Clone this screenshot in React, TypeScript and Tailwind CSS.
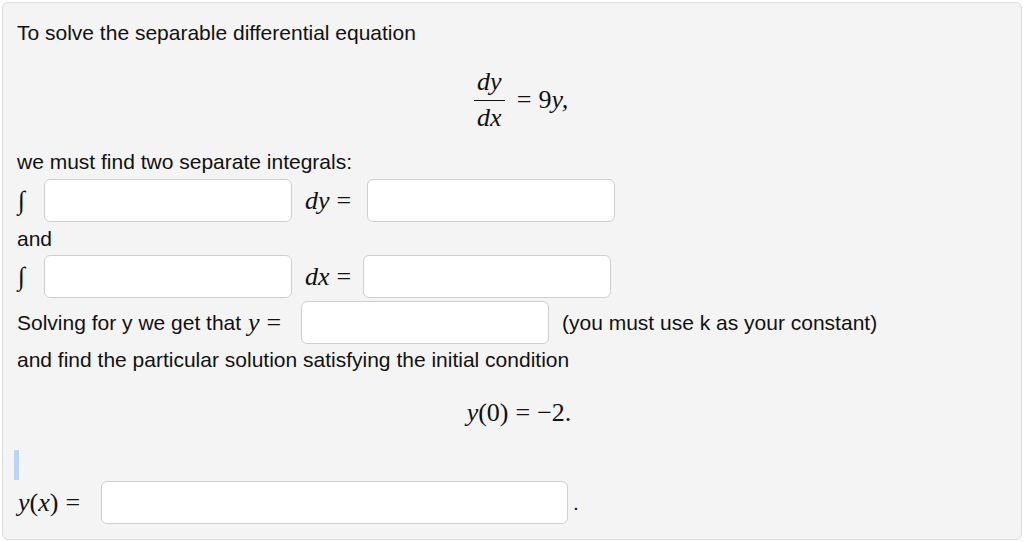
import React from "react";

const sans = "font-['Helvetica','Liberation_Sans',Arial,sans-serif]";
const math = "font-['Liberation_Serif','Times_New_Roman',serif] italic";

const Field = ({ className = "" }: { className?: string }) => (
  <input
    type="text"
    className={`h-[43px] rounded-md border-[1.5px] border-[#cfcfcf] bg-white outline-none ${className}`}
  />
);

const M = ({ children, className = "" }: { children: React.ReactNode; className?: string }) => (
  <span className={`${math} text-[26px] leading-none ${className}`}>{children}</span>
);

const Up = ({ children, className = "" }: { children: React.ReactNode; className?: string }) => (
  <span className={`not-italic ${className}`}>{children}</span>
);

const Eq = () => <Up className="mx-[7px]">=</Up>;

export default function App() {
  return (
    <div className="w-[1024px] h-[542px] bg-white p-[2px]">
      <div
        className={`${sans} h-[538px] w-[1020px] rounded-md border border-[#dcdcdc] bg-[#f4f4f4] pl-[14px] pt-[18px] text-[21px] leading-[24px] text-[#111]`}
      >
        <p>To solve the separable differential equation</p>

        {/* dy/dx = 9y, */}
        <div className="mt-[23px] flex h-[64px] items-center justify-center pl-[4px]">
          <div className="flex flex-col items-center">
            <M className="px-[3px] pb-[5px]">dy</M>
            <div className="h-[1.5px] w-[31px] bg-[#111]" />
            <M className="px-[3px] pt-[4px]">dx</M>
          </div>
          <M className="ml-[5px]">
            <Eq />
            <Up>9</Up>y,
          </M>
        </div>

        <p className="mt-[18px]">we must find two separate integrals:</p>

        <div className="mt-[5px] flex h-[43px] items-center">
          <M className="w-[27px] pl-[1px]">∫</M>
          <Field className="w-[248px]" />
          <M className="ml-[13px] w-[62px]">
            dy<Eq />
          </M>
          <Field className="w-[248px]" />
        </div>

        <p className="mt-[5px]">and</p>

        <div className="mt-[4px] flex h-[43px] items-center">
          <M className="w-[27px] pl-[1px]">∫</M>
          <Field className="w-[248px]" />
          <M className="ml-[13px] w-[58px]">
            dx<Eq />
          </M>
          <Field className="w-[248px]" />
        </div>

        <div className="mt-[3px] flex h-[43px] items-center">
          <span className="w-[231px]">Solving for y we get that</span>
          <M className="w-[53px]">
            y<Eq />
          </M>
          <Field className="w-[248px]" />
          <span className="ml-[13px]">(you must use k as your constant)</span>
        </div>

        <p className="mt-[4px]">and find the particular solution satisfying the initial condition</p>

        <div className="mt-[28px] flex h-[26px] items-center justify-center">
          <M>
            y<Up>(0)</Up>
            <Eq />
            <Up>−2.</Up>
          </M>
        </div>

        <div className="ml-[-3px] mt-[24px] h-[30px] w-[5px] bg-[#b9d5f6]" />

        <div className="mt-[1px] flex h-[43px] items-center">
          <M className="w-[84px] pl-[1px]">
            y<Up>(</Up>x<Up>)</Up>
            <Eq />
          </M>
          <Field className="w-[467px]" />
          <span className="ml-[5px]">.</span>
        </div>
      </div>
    </div>
  );
}
